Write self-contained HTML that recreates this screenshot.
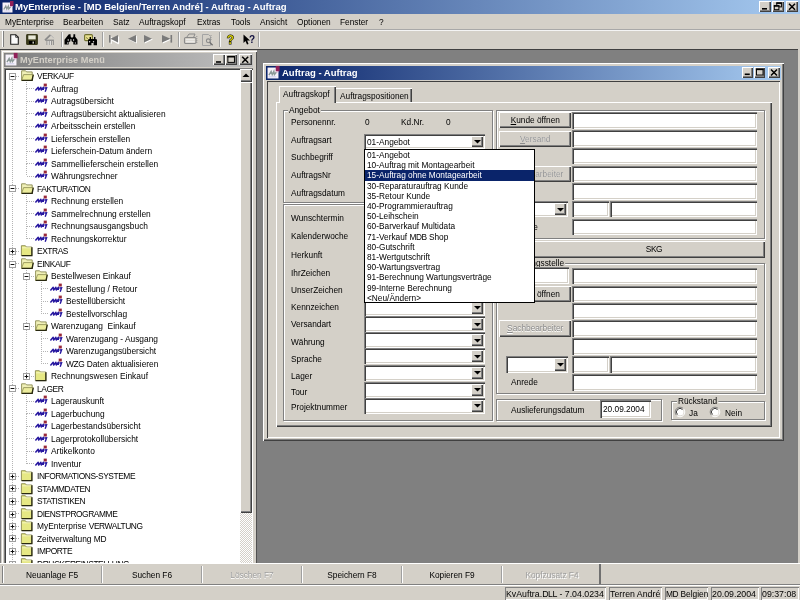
<!DOCTYPE html><html><head><meta charset="utf-8"><style>
*{margin:0;padding:0}
html,body{width:800px;height:600px;overflow:hidden;background:#d4d0c8;position:relative}
#root{position:absolute;left:0;top:0;width:800px;height:600px;will-change:transform}
div,svg{position:absolute}
.t{transform:scaleX(0.94);transform-origin:0 0;font-family:"Liberation Sans",sans-serif;font-size:8.83px;line-height:10px;white-space:nowrap;color:#000}
.b{will-change:transform;font-family:"Liberation Sans",sans-serif;font-size:9.5px;font-weight:bold;line-height:12px;white-space:nowrap;color:#fff}
</style></head><body><div id="root">

<div style="left:0px;top:0px;width:800px;height:14px;background:linear-gradient(to right,#0a246a,#a6caf0)"></div>
<svg style="position:absolute;left:2px;top:1.5px;overflow:visible" width="11" height="11" viewBox="0 0 11 11"><rect x="0.5" y="0.5" width="10" height="10" fill="#f6f2fa"/><rect x="8" y="-1" width="3.5" height="5" fill="#902058"/><rect x="8" y="4" width="2.5" height="1" fill="#e0b0d0"/><path d="M1.8,7.5 L3.8,4 L4.8,7 L6.3,4 L6.8,7 L8.5,4.8" fill="none" stroke="#8c9a98" stroke-width="1.3"/><rect x="1.5" y="8.6" width="7" height="0.8" fill="#c8c8e8"/></svg>
<div class="b" style="left:15px;top:1px;">MyEnterprise - [MD Belgien/Terren André] - Auftrag - Auftrag</div>
<div style="left:759px;top:1px;width:12px;height:11px;background:#d4d0c8;box-shadow:inset 1px 1px 0 #ffffff,inset -1px -1px 0 #404040,inset -2px -2px 0 #808080"></div>
<svg style="position:absolute;left:759px;top:1px;overflow:visible" width="12" height="11" viewBox="0 0 12 11"><rect x="3.0" y="7" width="5" height="1.6" fill="#000"/></svg>
<div style="left:772px;top:1px;width:12px;height:11px;background:#d4d0c8;box-shadow:inset 1px 1px 0 #ffffff,inset -1px -1px 0 #404040,inset -2px -2px 0 #808080"></div>
<svg style="position:absolute;left:772px;top:1px;overflow:visible" width="12" height="11" viewBox="0 0 12 11"><rect x="4.8" y="1.9" width="4.6" height="4" fill="none" stroke="#000" stroke-width="1"/><rect x="4.3" y="1.4000000000000004" width="5.6" height="1.5" fill="#000"/><rect x="2.3" y="4.7" width="4.6" height="4" fill="#d4d0c8" stroke="#000" stroke-width="1"/><rect x="1.7999999999999998" y="4.2" width="5.6" height="1.5" fill="#000"/></svg>
<div style="left:786px;top:1px;width:12px;height:11px;background:#d4d0c8;box-shadow:inset 1px 1px 0 #ffffff,inset -1px -1px 0 #404040,inset -2px -2px 0 #808080"></div>
<svg style="position:absolute;left:786px;top:1px;overflow:visible" width="12" height="11" viewBox="0 0 12 11"><path d="M3.0,2.7L9.0,8.7M9.0,2.7L3.0,8.7" stroke="#000" stroke-width="1.5"/></svg>
<div class="t" style="left:4.5px;top:17px;">MyEnterprise</div>
<div class="t" style="left:62.5px;top:17px;">Bearbeiten</div>
<div class="t" style="left:113px;top:17px;">Satz</div>
<div class="t" style="left:138.7px;top:17px;">Auftragskopf</div>
<div class="t" style="left:197px;top:17px;">Extras</div>
<div class="t" style="left:231.2px;top:17px;">Tools</div>
<div class="t" style="left:260px;top:17px;">Ansicht</div>
<div class="t" style="left:296.7px;top:17px;">Optionen</div>
<div class="t" style="left:340px;top:17px;">Fenster</div>
<div class="t" style="left:378.7px;top:17px;">?</div>
<div style="left:0px;top:29px;width:800px;height:1px;background:#a8a8a8"></div>
<div style="left:0px;top:30px;width:800px;height:1px;background:#f4f4f4"></div>
<div style="left:2px;top:31px;width:1px;height:16px;background:#fff"></div>
<div style="left:3px;top:31px;width:1px;height:16px;background:#808080"></div>
<svg style="position:absolute;left:10px;top:34px;overflow:visible" width="9" height="11" viewBox="0 0 9 11"><path d="M0.7,0.7h5l2.6,2.6v7h-7.6z" fill="#fafafa" stroke="#202020" stroke-width="1.1"/><path d="M5.7,0.7v2.6h2.6" fill="none" stroke="#202020" stroke-width="0.8"/></svg>
<svg style="position:absolute;left:26px;top:33.6px;overflow:visible" width="12" height="11" viewBox="0 0 12 11"><rect x="0.7" y="0.7" width="10.6" height="9.8" rx="0.8" fill="#3a3a1c" stroke="#3a3a1c" stroke-width="1.2"/><rect x="2.3" y="1.4" width="7.4" height="4" fill="#e8e8d8"/><rect x="3" y="7" width="6" height="3" fill="#000"/><rect x="6.5" y="7.6" width="1.5" height="2" fill="#c8c8b8"/></svg>
<svg style="position:absolute;left:43.5px;top:33.5px;overflow:visible" width="11" height="11" viewBox="0 0 11 11"><path d="M1,6.2 L6.5,0.8" stroke="#8a8a8a" stroke-width="1.7"/><path d="M6.8,1 L9.8,4.2" stroke="#b4b4b4" stroke-width="1"/><rect x="1.5" y="5.6" width="8.5" height="1.3" fill="#8c8c8c"/><path d="M3,7 v4 M5.2,7 v4 M7.4,7 v4 M9.4,7 v4" stroke="#8c8c8c" stroke-width="1"/><path d="M4.1,7 v4 M6.3,7 v4" stroke="#e8e8e8" stroke-width="0.8"/></svg>
<div style="left:61px;top:32px;width:1px;height:15px;background:#a0a0a0"></div>
<div style="left:62px;top:32px;width:1px;height:15px;background:#f8f8f8"></div>
<svg style="position:absolute;left:66px;top:34.2px;overflow:visible" width="12" height="11" viewBox="0 0 12 11"><path d="M2.8,0.3h1.8v2.2l1.4,1.6l1.4,-1.6v-2.2h1.8v2.5l2.3,3v4.8h-4.2v-2.8h-1.5v-1h-1.6v1h-1.5v2.8h-4.2v-4.8l2.3,-3z" fill="#000"/><ellipse cx="2.2" cy="6" rx="0.6" ry="0.9" fill="#d0d0d0"/><ellipse cx="4.9" cy="6" rx="0.6" ry="0.9" fill="#d0d0d0"/><ellipse cx="7.6" cy="6" rx="0.6" ry="0.9" fill="#c0c0c0"/><ellipse cx="1.6" cy="9" rx="0.6" ry="0.8" fill="#d0d0d0"/><ellipse cx="9.4" cy="9" rx="0.6" ry="0.8" fill="#c0c0c0"/></svg>
<svg style="position:absolute;left:84px;top:33.5px;overflow:visible" width="9" height="7" viewBox="0 0 9 7"><rect x="0.6" y="0.6" width="7.8" height="6" rx="1" fill="#e8e090" stroke="#707030" stroke-width="1.1"/><path d="M2,3.5 l2,1.2" stroke="#707030" stroke-width="0.8"/></svg>
<svg style="position:absolute;left:88px;top:36.7px;overflow:visible" width="9" height="8.5" viewBox="0 0 9 8.5"><path d="M1.6,0h1.4v2h3v-2h1.4v2l1.6,0.5v5.8h-3.4v-2.3h-2.2v2.3h-3.4v-5.8l1.6,-0.5z" fill="#000"/><circle cx="1.6" cy="4.8" r="0.7" fill="#e0e0e0"/><circle cx="5.5" cy="4.8" r="0.7" fill="#e0e0e0"/></svg>
<div style="left:102px;top:32px;width:1px;height:15px;background:#a0a0a0"></div>
<div style="left:103px;top:32px;width:1px;height:15px;background:#f8f8f8"></div>
<svg style="position:absolute;left:109px;top:35px;overflow:visible" width="10" height="8" viewBox="0 0 10 8"><path d="M1.5,1 v7 M2,4.5 L8.8,1 V8z" fill="#ffffff" stroke="#ffffff" stroke-width="1" transform="translate(0.8,0.8)"/><rect x="0" y="0" width="1.5" height="7.6" fill="#7a7a7a"/><path d="M1.5,3.8 L9,0 V7.6z" fill="#7a7a7a"/></svg>
<svg style="position:absolute;left:128px;top:35px;overflow:visible" width="9" height="8" viewBox="0 0 9 8"><path d="M0,3.8 L8,0 V7.6z" fill="#ffffff" transform="translate(0.8,0.8)"/><path d="M0,3.8 L8,0 V7.6z" fill="#7a7a7a"/></svg>
<svg style="position:absolute;left:144px;top:35px;overflow:visible" width="9" height="8" viewBox="0 0 9 8"><path d="M8,3.8 L0,0 V7.6z" fill="#ffffff" transform="translate(0.8,0.8)"/><path d="M8,3.8 L0,0 V7.6z" fill="#7a7a7a"/></svg>
<svg style="position:absolute;left:162px;top:35px;overflow:visible" width="11" height="8" viewBox="0 0 11 8"><path d="M8.5,3.8 L0,0 V7.6z" fill="#ffffff" transform="translate(0.8,0.8)"/><path d="M8.5,3.8 L0,0 V7.6z" fill="#7a7a7a"/><rect x="8.5" y="0" width="1.6" height="7.6" fill="#7a7a7a"/></svg>
<div style="left:178px;top:32px;width:1px;height:15px;background:#a0a0a0"></div>
<div style="left:179px;top:32px;width:1px;height:15px;background:#f8f8f8"></div>
<svg style="position:absolute;left:183.5px;top:33px;overflow:visible" width="13" height="11" viewBox="0 0 13 11"><path d="M2.5,4.5 L5,1 H11 L9.5,4.5" fill="none" stroke="#8a8a8a" stroke-width="1"/><rect x="0.5" y="4.5" width="11.5" height="6" rx="1.2" fill="none" stroke="#8a8a8a" stroke-width="1.1"/><path d="M1.8,6.8 h9 M1.8,8.8 h9" stroke="#f4f4f4" stroke-width="1"/><path d="M12.8,3 v8" stroke="#909090" stroke-width="0.9" stroke-dasharray="1 1"/></svg>
<svg style="position:absolute;left:201.5px;top:33.5px;overflow:visible" width="12" height="12" viewBox="0 0 12 12"><path d="M0.5,0.5 h6 l2,2 v9 h-8z" fill="none" stroke="#a4a4a4" stroke-width="1"/><circle cx="6.3" cy="6.8" r="1.9" fill="none" stroke="#8a8a8a" stroke-width="1.1"/><path d="M7.6,8.2 l3,3" stroke="#707070" stroke-width="1.4"/><path d="M9,1 v5" stroke="#909090" stroke-width="0.9" stroke-dasharray="1 1"/></svg>
<div style="left:219px;top:32px;width:1px;height:15px;background:#a0a0a0"></div>
<div style="left:220px;top:32px;width:1px;height:15px;background:#f8f8f8"></div>
<svg style="position:absolute;left:225.5px;top:33.5px;overflow:visible" width="9" height="12" viewBox="0 0 9 12"><text x="4.5" y="10" text-anchor="middle" font-family="Liberation Sans" font-weight="bold" font-size="12" fill="#c8c000" stroke="#000" stroke-width="0.9" paint-order="stroke">?</text></svg>
<svg style="position:absolute;left:242.5px;top:33.5px;overflow:visible" width="12" height="11" viewBox="0 0 12 11"><path d="M0.5,0.5 L0.5,9 L2.5,7 L4,10.5 L5.5,10 L4.2,6.5 L7,6.5z" fill="#000"/><text x="9" y="8.5" text-anchor="middle" font-family="Liberation Sans" font-weight="bold" font-size="10" fill="#101040">?</text></svg>
<div style="left:258px;top:32px;width:1px;height:15px;background:#a0a0a0"></div>
<div style="left:259px;top:32px;width:1px;height:15px;background:#f8f8f8"></div>
<div style="left:0px;top:49px;width:800px;height:514px;background:#808080"></div>
<div style="left:0px;top:49px;width:800px;height:1px;background:#404040"></div>
<div style="left:798px;top:49px;width:2px;height:514px;background:#d4d0c8"></div>
<div style="left:1px;top:50px;width:256px;height:520px;background:#d4d0c8;box-shadow:inset 1px 1px 0 #d4d0c8,inset 2px 2px 0 #ffffff,inset -1px 0 0 #505050"></div>
<div style="left:4px;top:53px;width:248.5px;height:14px;background:linear-gradient(to right,#808080,#c0c0c0)"></div>
<svg style="position:absolute;left:5px;top:54px;overflow:visible" width="12" height="12" viewBox="0 0 11 11"><rect x="0.5" y="0.5" width="10" height="10" fill="#f6f2fa"/><rect x="8" y="-1" width="3.5" height="5" fill="#902058"/><rect x="8" y="4" width="2.5" height="1" fill="#e0b0d0"/><path d="M1.8,7.5 L3.8,4 L4.8,7 L6.3,4 L6.8,7 L8.5,4.8" fill="none" stroke="#8c9a98" stroke-width="1.3"/><rect x="1.5" y="8.6" width="7" height="0.8" fill="#c8c8e8"/></svg>
<div class="b" style="left:20px;top:54px;color:#d4d0c8;font-size:9.2px">MyEnterprise Menü</div>
<div style="left:213.2px;top:54.3px;width:12px;height:11.2px;background:#d4d0c8;box-shadow:inset 1px 1px 0 #ffffff,inset -1px -1px 0 #404040,inset -2px -2px 0 #808080"></div>
<svg style="position:absolute;left:213.2px;top:54.3px;overflow:visible" width="12" height="11.2" viewBox="0 0 12 11.2"><rect x="3.0" y="7.199999999999999" width="5" height="1.6" fill="#000"/></svg>
<div style="left:225.2px;top:54.3px;width:12.3px;height:11.2px;background:#d4d0c8;box-shadow:inset 1px 1px 0 #ffffff,inset -1px -1px 0 #404040,inset -2px -2px 0 #808080"></div>
<svg style="position:absolute;left:225.2px;top:54.3px;overflow:visible" width="12.3" height="11.2" viewBox="0 0 12.3 11.2"><rect x="2.8500000000000005" y="2.3999999999999995" width="6.6" height="6" fill="none" stroke="#000" stroke-width="1"/><rect x="2.3500000000000005" y="1.8999999999999995" width="7.6" height="1.6" fill="#000"/></svg>
<div style="left:239.3px;top:54.3px;width:12.4px;height:11.2px;background:#d4d0c8;box-shadow:inset 1px 1px 0 #ffffff,inset -1px -1px 0 #404040,inset -2px -2px 0 #808080"></div>
<svg style="position:absolute;left:239.3px;top:54.3px;overflow:visible" width="12.4" height="11.2" viewBox="0 0 12.4 11.2"><path d="M3.2,2.8L9.2,8.8M9.2,2.8L3.2,8.8" stroke="#000" stroke-width="1.5"/></svg>
<div style="left:4px;top:68px;width:248.5px;height:500px;background:#fff;box-shadow:inset 1px 1px 0 #808080,inset 2px 2px 0 #404040"></div>
<div style="left:240px;top:69px;width:12px;height:494px;background:repeating-conic-gradient(#fff 0 25%,#d4d0c8 0 50%) 0 0/2px 2px"></div>
<div style="left:240px;top:69px;width:12px;height:12.5px;background:#d4d0c8;box-shadow:inset 1px 1px 0 #ffffff,inset -1px -1px 0 #404040,inset -2px -2px 0 #808080"></div>
<svg style="position:absolute;left:242px;top:73px;overflow:visible" width="8" height="5" viewBox="0 0 8 5"><path d="M4,0.5 L7.5,4 H0.5z" fill="#000"/></svg>
<div style="left:240px;top:81.5px;width:12px;height:431.5px;background:#d4d0c8;box-shadow:inset 1px 1px 0 #ffffff,inset -1px -1px 0 #404040,inset -2px -2px 0 #808080"></div>
<div style="left:11.5px;top:76.0px;width:1px;height:112.5px;background:repeating-linear-gradient(to bottom,#b4b4b4 0 1px,transparent 1px 2px)"></div>
<div style="left:26.2px;top:88.5px;width:1px;height:12.5px;background:repeating-linear-gradient(to bottom,#b4b4b4 0 1px,transparent 1px 2px)"></div>
<div style="left:26.2px;top:80.0px;width:1px;height:8.5px;background:repeating-linear-gradient(to bottom,#b4b4b4 0 1px,transparent 1px 2px)"></div>
<div style="left:26.2px;top:101.0px;width:1px;height:12.5px;background:repeating-linear-gradient(to bottom,#b4b4b4 0 1px,transparent 1px 2px)"></div>
<div style="left:26.2px;top:113.5px;width:1px;height:12.5px;background:repeating-linear-gradient(to bottom,#b4b4b4 0 1px,transparent 1px 2px)"></div>
<div style="left:26.2px;top:126.0px;width:1px;height:12.5px;background:repeating-linear-gradient(to bottom,#b4b4b4 0 1px,transparent 1px 2px)"></div>
<div style="left:26.2px;top:138.5px;width:1px;height:12.5px;background:repeating-linear-gradient(to bottom,#b4b4b4 0 1px,transparent 1px 2px)"></div>
<div style="left:26.2px;top:151.0px;width:1px;height:12.5px;background:repeating-linear-gradient(to bottom,#b4b4b4 0 1px,transparent 1px 2px)"></div>
<div style="left:26.2px;top:163.5px;width:1px;height:12.5px;background:repeating-linear-gradient(to bottom,#b4b4b4 0 1px,transparent 1px 2px)"></div>
<div style="left:11.5px;top:188.5px;width:1px;height:62.5px;background:repeating-linear-gradient(to bottom,#b4b4b4 0 1px,transparent 1px 2px)"></div>
<div style="left:26.2px;top:201.0px;width:1px;height:12.5px;background:repeating-linear-gradient(to bottom,#b4b4b4 0 1px,transparent 1px 2px)"></div>
<div style="left:26.2px;top:192.5px;width:1px;height:8.5px;background:repeating-linear-gradient(to bottom,#b4b4b4 0 1px,transparent 1px 2px)"></div>
<div style="left:26.2px;top:213.5px;width:1px;height:12.5px;background:repeating-linear-gradient(to bottom,#b4b4b4 0 1px,transparent 1px 2px)"></div>
<div style="left:26.2px;top:226.0px;width:1px;height:12.5px;background:repeating-linear-gradient(to bottom,#b4b4b4 0 1px,transparent 1px 2px)"></div>
<div style="left:11.5px;top:251.0px;width:1px;height:12.5px;background:repeating-linear-gradient(to bottom,#b4b4b4 0 1px,transparent 1px 2px)"></div>
<div style="left:11.5px;top:263.5px;width:1px;height:125.0px;background:repeating-linear-gradient(to bottom,#b4b4b4 0 1px,transparent 1px 2px)"></div>
<div style="left:26.2px;top:276.0px;width:1px;height:50.0px;background:repeating-linear-gradient(to bottom,#b4b4b4 0 1px,transparent 1px 2px)"></div>
<div style="left:26.2px;top:267.5px;width:1px;height:8.5px;background:repeating-linear-gradient(to bottom,#b4b4b4 0 1px,transparent 1px 2px)"></div>
<div style="left:40.9px;top:288.5px;width:1px;height:12.5px;background:repeating-linear-gradient(to bottom,#b4b4b4 0 1px,transparent 1px 2px)"></div>
<div style="left:40.9px;top:280.0px;width:1px;height:8.5px;background:repeating-linear-gradient(to bottom,#b4b4b4 0 1px,transparent 1px 2px)"></div>
<div style="left:40.9px;top:301.0px;width:1px;height:12.5px;background:repeating-linear-gradient(to bottom,#b4b4b4 0 1px,transparent 1px 2px)"></div>
<div style="left:26.2px;top:326.0px;width:1px;height:50.0px;background:repeating-linear-gradient(to bottom,#b4b4b4 0 1px,transparent 1px 2px)"></div>
<div style="left:40.9px;top:338.5px;width:1px;height:12.5px;background:repeating-linear-gradient(to bottom,#b4b4b4 0 1px,transparent 1px 2px)"></div>
<div style="left:40.9px;top:330.0px;width:1px;height:8.5px;background:repeating-linear-gradient(to bottom,#b4b4b4 0 1px,transparent 1px 2px)"></div>
<div style="left:40.9px;top:351.0px;width:1px;height:12.5px;background:repeating-linear-gradient(to bottom,#b4b4b4 0 1px,transparent 1px 2px)"></div>
<div style="left:11.5px;top:388.5px;width:1px;height:87.5px;background:repeating-linear-gradient(to bottom,#b4b4b4 0 1px,transparent 1px 2px)"></div>
<div style="left:26.2px;top:401.0px;width:1px;height:12.5px;background:repeating-linear-gradient(to bottom,#b4b4b4 0 1px,transparent 1px 2px)"></div>
<div style="left:26.2px;top:392.5px;width:1px;height:8.5px;background:repeating-linear-gradient(to bottom,#b4b4b4 0 1px,transparent 1px 2px)"></div>
<div style="left:26.2px;top:413.5px;width:1px;height:12.5px;background:repeating-linear-gradient(to bottom,#b4b4b4 0 1px,transparent 1px 2px)"></div>
<div style="left:26.2px;top:426.0px;width:1px;height:12.5px;background:repeating-linear-gradient(to bottom,#b4b4b4 0 1px,transparent 1px 2px)"></div>
<div style="left:26.2px;top:438.5px;width:1px;height:12.5px;background:repeating-linear-gradient(to bottom,#b4b4b4 0 1px,transparent 1px 2px)"></div>
<div style="left:26.2px;top:451.0px;width:1px;height:12.5px;background:repeating-linear-gradient(to bottom,#b4b4b4 0 1px,transparent 1px 2px)"></div>
<div style="left:11.5px;top:476.0px;width:1px;height:12.5px;background:repeating-linear-gradient(to bottom,#b4b4b4 0 1px,transparent 1px 2px)"></div>
<div style="left:11.5px;top:488.5px;width:1px;height:12.5px;background:repeating-linear-gradient(to bottom,#b4b4b4 0 1px,transparent 1px 2px)"></div>
<div style="left:11.5px;top:501.0px;width:1px;height:12.5px;background:repeating-linear-gradient(to bottom,#b4b4b4 0 1px,transparent 1px 2px)"></div>
<div style="left:11.5px;top:513.5px;width:1px;height:12.5px;background:repeating-linear-gradient(to bottom,#b4b4b4 0 1px,transparent 1px 2px)"></div>
<div style="left:11.5px;top:526.0px;width:1px;height:12.5px;background:repeating-linear-gradient(to bottom,#b4b4b4 0 1px,transparent 1px 2px)"></div>
<div style="left:11.5px;top:538.5px;width:1px;height:12.5px;background:repeating-linear-gradient(to bottom,#b4b4b4 0 1px,transparent 1px 2px)"></div>
<div style="left:11.5px;top:551.0px;width:1px;height:12.5px;background:repeating-linear-gradient(to bottom,#b4b4b4 0 1px,transparent 1px 2px)"></div>
<div style="left:12.0px;top:75.5px;width:8.0px;height:1px;background:repeating-linear-gradient(to right,#b4b4b4 0 1px,transparent 1px 2px)"></div>
<svg style="position:absolute;left:9px;top:73px;overflow:visible" width="7" height="7" viewBox="0 0 7 7"><rect x="0.5" y="0.5" width="6" height="6" fill="#fff" stroke="#a0a0a0" stroke-width="1"/><path d="M1.6,3.5h3.8" stroke="#101010" stroke-width="1"/></svg>
<svg style="position:absolute;left:20.5px;top:71.0px;overflow:visible" width="13" height="10" viewBox="0 0 13 10"><path d="M0.6,-0.2h4l1,1.1h5.6v8.6h-10.6z" fill="#f0f0b8" stroke="#8a8a50" stroke-width="0.9"/><path d="M0.6,9.4 L2.6,3.6 H12.4 L10.6,9.4z" fill="#ecec9c" stroke="#8a8a50" stroke-width="0.8"/><path d="M12.2,3.8 L11.2,9.3 H0.8" fill="none" stroke="#282810" stroke-width="1.3"/></svg>
<div class="t" style="left:36.5px;top:71.0px;font-size:8.94px"><span style="letter-spacing:-0.45px">VERKAUF</span></div>
<div style="left:26.7px;top:88.0px;width:8.000000000000004px;height:1px;background:repeating-linear-gradient(to right,#b4b4b4 0 1px,transparent 1px 2px)"></div>
<svg style="position:absolute;left:35.2px;top:83.5px;overflow:visible" width="13" height="9" viewBox="0 0 13 9"><rect x="8.7" y="-0.4" width="3.1" height="2.9" fill="#982838"/><path d="M0.4,6.5 L3.2,3.3 L3.7,6 L5.9,3.3 L6.3,6 L8.5,3.3 L8.2,6" stroke="#2818a0" stroke-width="1.5" fill="none" stroke-linejoin="round"/><path d="M9.4,4 L11.6,3.8 L10.2,7.8" stroke="#2818a0" stroke-width="1.4" fill="none"/></svg>
<div class="t" style="left:51.2px;top:83.5px;font-size:8.94px">Auftrag</div>
<div style="left:26.7px;top:100.5px;width:8.000000000000004px;height:1px;background:repeating-linear-gradient(to right,#b4b4b4 0 1px,transparent 1px 2px)"></div>
<svg style="position:absolute;left:35.2px;top:96.0px;overflow:visible" width="13" height="9" viewBox="0 0 13 9"><rect x="8.7" y="-0.4" width="3.1" height="2.9" fill="#982838"/><path d="M0.4,6.5 L3.2,3.3 L3.7,6 L5.9,3.3 L6.3,6 L8.5,3.3 L8.2,6" stroke="#2818a0" stroke-width="1.5" fill="none" stroke-linejoin="round"/><path d="M9.4,4 L11.6,3.8 L10.2,7.8" stroke="#2818a0" stroke-width="1.4" fill="none"/></svg>
<div class="t" style="left:51.2px;top:96.0px;font-size:8.94px">Autragsübersicht</div>
<div style="left:26.7px;top:113.0px;width:8.000000000000004px;height:1px;background:repeating-linear-gradient(to right,#b4b4b4 0 1px,transparent 1px 2px)"></div>
<svg style="position:absolute;left:35.2px;top:108.5px;overflow:visible" width="13" height="9" viewBox="0 0 13 9"><rect x="8.7" y="-0.4" width="3.1" height="2.9" fill="#982838"/><path d="M0.4,6.5 L3.2,3.3 L3.7,6 L5.9,3.3 L6.3,6 L8.5,3.3 L8.2,6" stroke="#2818a0" stroke-width="1.5" fill="none" stroke-linejoin="round"/><path d="M9.4,4 L11.6,3.8 L10.2,7.8" stroke="#2818a0" stroke-width="1.4" fill="none"/></svg>
<div class="t" style="left:51.2px;top:108.5px;font-size:8.94px">Auftragsübersicht aktualisieren</div>
<div style="left:26.7px;top:125.5px;width:8.000000000000004px;height:1px;background:repeating-linear-gradient(to right,#b4b4b4 0 1px,transparent 1px 2px)"></div>
<svg style="position:absolute;left:35.2px;top:121.0px;overflow:visible" width="13" height="9" viewBox="0 0 13 9"><rect x="8.7" y="-0.4" width="3.1" height="2.9" fill="#982838"/><path d="M0.4,6.5 L3.2,3.3 L3.7,6 L5.9,3.3 L6.3,6 L8.5,3.3 L8.2,6" stroke="#2818a0" stroke-width="1.5" fill="none" stroke-linejoin="round"/><path d="M9.4,4 L11.6,3.8 L10.2,7.8" stroke="#2818a0" stroke-width="1.4" fill="none"/></svg>
<div class="t" style="left:51.2px;top:121.0px;font-size:8.94px">Arbeitsschein erstellen</div>
<div style="left:26.7px;top:138.0px;width:8.000000000000004px;height:1px;background:repeating-linear-gradient(to right,#b4b4b4 0 1px,transparent 1px 2px)"></div>
<svg style="position:absolute;left:35.2px;top:133.5px;overflow:visible" width="13" height="9" viewBox="0 0 13 9"><rect x="8.7" y="-0.4" width="3.1" height="2.9" fill="#982838"/><path d="M0.4,6.5 L3.2,3.3 L3.7,6 L5.9,3.3 L6.3,6 L8.5,3.3 L8.2,6" stroke="#2818a0" stroke-width="1.5" fill="none" stroke-linejoin="round"/><path d="M9.4,4 L11.6,3.8 L10.2,7.8" stroke="#2818a0" stroke-width="1.4" fill="none"/></svg>
<div class="t" style="left:51.2px;top:133.5px;font-size:8.94px">Lieferschein erstellen</div>
<div style="left:26.7px;top:150.5px;width:8.000000000000004px;height:1px;background:repeating-linear-gradient(to right,#b4b4b4 0 1px,transparent 1px 2px)"></div>
<svg style="position:absolute;left:35.2px;top:146.0px;overflow:visible" width="13" height="9" viewBox="0 0 13 9"><rect x="8.7" y="-0.4" width="3.1" height="2.9" fill="#982838"/><path d="M0.4,6.5 L3.2,3.3 L3.7,6 L5.9,3.3 L6.3,6 L8.5,3.3 L8.2,6" stroke="#2818a0" stroke-width="1.5" fill="none" stroke-linejoin="round"/><path d="M9.4,4 L11.6,3.8 L10.2,7.8" stroke="#2818a0" stroke-width="1.4" fill="none"/></svg>
<div class="t" style="left:51.2px;top:146.0px;font-size:8.94px">Lieferschein-Datum ändern</div>
<div style="left:26.7px;top:163.0px;width:8.000000000000004px;height:1px;background:repeating-linear-gradient(to right,#b4b4b4 0 1px,transparent 1px 2px)"></div>
<svg style="position:absolute;left:35.2px;top:158.5px;overflow:visible" width="13" height="9" viewBox="0 0 13 9"><rect x="8.7" y="-0.4" width="3.1" height="2.9" fill="#982838"/><path d="M0.4,6.5 L3.2,3.3 L3.7,6 L5.9,3.3 L6.3,6 L8.5,3.3 L8.2,6" stroke="#2818a0" stroke-width="1.5" fill="none" stroke-linejoin="round"/><path d="M9.4,4 L11.6,3.8 L10.2,7.8" stroke="#2818a0" stroke-width="1.4" fill="none"/></svg>
<div class="t" style="left:51.2px;top:158.5px;font-size:8.94px">Sammellieferschein erstellen</div>
<div style="left:26.7px;top:175.5px;width:8.000000000000004px;height:1px;background:repeating-linear-gradient(to right,#b4b4b4 0 1px,transparent 1px 2px)"></div>
<svg style="position:absolute;left:35.2px;top:171.0px;overflow:visible" width="13" height="9" viewBox="0 0 13 9"><rect x="8.7" y="-0.4" width="3.1" height="2.9" fill="#982838"/><path d="M0.4,6.5 L3.2,3.3 L3.7,6 L5.9,3.3 L6.3,6 L8.5,3.3 L8.2,6" stroke="#2818a0" stroke-width="1.5" fill="none" stroke-linejoin="round"/><path d="M9.4,4 L11.6,3.8 L10.2,7.8" stroke="#2818a0" stroke-width="1.4" fill="none"/></svg>
<div class="t" style="left:51.2px;top:171.0px;font-size:8.94px">Währungsrechner</div>
<div style="left:12.0px;top:188.0px;width:8.0px;height:1px;background:repeating-linear-gradient(to right,#b4b4b4 0 1px,transparent 1px 2px)"></div>
<svg style="position:absolute;left:9px;top:185px;overflow:visible" width="7" height="7" viewBox="0 0 7 7"><rect x="0.5" y="0.5" width="6" height="6" fill="#fff" stroke="#a0a0a0" stroke-width="1"/><path d="M1.6,3.5h3.8" stroke="#101010" stroke-width="1"/></svg>
<svg style="position:absolute;left:20.5px;top:183.5px;overflow:visible" width="13" height="10" viewBox="0 0 13 10"><path d="M0.6,-0.2h4l1,1.1h5.6v8.6h-10.6z" fill="#f0f0b8" stroke="#8a8a50" stroke-width="0.9"/><path d="M0.6,9.4 L2.6,3.6 H12.4 L10.6,9.4z" fill="#ecec9c" stroke="#8a8a50" stroke-width="0.8"/><path d="M12.2,3.8 L11.2,9.3 H0.8" fill="none" stroke="#282810" stroke-width="1.3"/></svg>
<div class="t" style="left:36.5px;top:183.5px;font-size:8.94px"><span style="letter-spacing:-0.45px">FAKTURATION</span></div>
<div style="left:26.7px;top:200.5px;width:8.000000000000004px;height:1px;background:repeating-linear-gradient(to right,#b4b4b4 0 1px,transparent 1px 2px)"></div>
<svg style="position:absolute;left:35.2px;top:196.0px;overflow:visible" width="13" height="9" viewBox="0 0 13 9"><rect x="8.7" y="-0.4" width="3.1" height="2.9" fill="#982838"/><path d="M0.4,6.5 L3.2,3.3 L3.7,6 L5.9,3.3 L6.3,6 L8.5,3.3 L8.2,6" stroke="#2818a0" stroke-width="1.5" fill="none" stroke-linejoin="round"/><path d="M9.4,4 L11.6,3.8 L10.2,7.8" stroke="#2818a0" stroke-width="1.4" fill="none"/></svg>
<div class="t" style="left:51.2px;top:196.0px;font-size:8.94px">Rechnung erstellen</div>
<div style="left:26.7px;top:213.0px;width:8.000000000000004px;height:1px;background:repeating-linear-gradient(to right,#b4b4b4 0 1px,transparent 1px 2px)"></div>
<svg style="position:absolute;left:35.2px;top:208.5px;overflow:visible" width="13" height="9" viewBox="0 0 13 9"><rect x="8.7" y="-0.4" width="3.1" height="2.9" fill="#982838"/><path d="M0.4,6.5 L3.2,3.3 L3.7,6 L5.9,3.3 L6.3,6 L8.5,3.3 L8.2,6" stroke="#2818a0" stroke-width="1.5" fill="none" stroke-linejoin="round"/><path d="M9.4,4 L11.6,3.8 L10.2,7.8" stroke="#2818a0" stroke-width="1.4" fill="none"/></svg>
<div class="t" style="left:51.2px;top:208.5px;font-size:8.94px">Sammelrechnung erstellen</div>
<div style="left:26.7px;top:225.5px;width:8.000000000000004px;height:1px;background:repeating-linear-gradient(to right,#b4b4b4 0 1px,transparent 1px 2px)"></div>
<svg style="position:absolute;left:35.2px;top:221.0px;overflow:visible" width="13" height="9" viewBox="0 0 13 9"><rect x="8.7" y="-0.4" width="3.1" height="2.9" fill="#982838"/><path d="M0.4,6.5 L3.2,3.3 L3.7,6 L5.9,3.3 L6.3,6 L8.5,3.3 L8.2,6" stroke="#2818a0" stroke-width="1.5" fill="none" stroke-linejoin="round"/><path d="M9.4,4 L11.6,3.8 L10.2,7.8" stroke="#2818a0" stroke-width="1.4" fill="none"/></svg>
<div class="t" style="left:51.2px;top:221.0px;font-size:8.94px">Rechnungsausgangsbuch</div>
<div style="left:26.7px;top:238.0px;width:8.000000000000004px;height:1px;background:repeating-linear-gradient(to right,#b4b4b4 0 1px,transparent 1px 2px)"></div>
<svg style="position:absolute;left:35.2px;top:233.5px;overflow:visible" width="13" height="9" viewBox="0 0 13 9"><rect x="8.7" y="-0.4" width="3.1" height="2.9" fill="#982838"/><path d="M0.4,6.5 L3.2,3.3 L3.7,6 L5.9,3.3 L6.3,6 L8.5,3.3 L8.2,6" stroke="#2818a0" stroke-width="1.5" fill="none" stroke-linejoin="round"/><path d="M9.4,4 L11.6,3.8 L10.2,7.8" stroke="#2818a0" stroke-width="1.4" fill="none"/></svg>
<div class="t" style="left:51.2px;top:233.5px;font-size:8.94px">Rechnungskorrektur</div>
<div style="left:12.0px;top:250.5px;width:8.0px;height:1px;background:repeating-linear-gradient(to right,#b4b4b4 0 1px,transparent 1px 2px)"></div>
<svg style="position:absolute;left:9px;top:248px;overflow:visible" width="7" height="7" viewBox="0 0 7 7"><rect x="0.5" y="0.5" width="6" height="6" fill="#fff" stroke="#a0a0a0" stroke-width="1"/><path d="M1.6,3.5h3.8M3.5,1.6v3.8" stroke="#101010" stroke-width="1"/></svg>
<svg style="position:absolute;left:20.5px;top:246.0px;overflow:visible" width="13" height="10" viewBox="0 0 13 10"><path d="M0.4,-0.3h4l1,1.3h5.4v8.6h-10.4z" fill="#e6e884" stroke="#8a8a50" stroke-width="0.9"/><path d="M1.2,1.8h9.2" stroke="#fafad0" stroke-width="0.8"/><path d="M10.9,1.2 V9.7 H0.6" fill="none" stroke="#282810" stroke-width="1.3"/></svg>
<div class="t" style="left:36.5px;top:246.0px;font-size:8.94px"><span style="letter-spacing:-0.45px">EXTRAS</span></div>
<div style="left:12.0px;top:263.0px;width:8.0px;height:1px;background:repeating-linear-gradient(to right,#b4b4b4 0 1px,transparent 1px 2px)"></div>
<svg style="position:absolute;left:9px;top:261px;overflow:visible" width="7" height="7" viewBox="0 0 7 7"><rect x="0.5" y="0.5" width="6" height="6" fill="#fff" stroke="#a0a0a0" stroke-width="1"/><path d="M1.6,3.5h3.8" stroke="#101010" stroke-width="1"/></svg>
<svg style="position:absolute;left:20.5px;top:258.5px;overflow:visible" width="13" height="10" viewBox="0 0 13 10"><path d="M0.6,-0.2h4l1,1.1h5.6v8.6h-10.6z" fill="#f0f0b8" stroke="#8a8a50" stroke-width="0.9"/><path d="M0.6,9.4 L2.6,3.6 H12.4 L10.6,9.4z" fill="#ecec9c" stroke="#8a8a50" stroke-width="0.8"/><path d="M12.2,3.8 L11.2,9.3 H0.8" fill="none" stroke="#282810" stroke-width="1.3"/></svg>
<div class="t" style="left:36.5px;top:258.5px;font-size:8.94px"><span style="letter-spacing:-0.45px">EINKAUF</span></div>
<div style="left:26.7px;top:275.5px;width:8.000000000000004px;height:1px;background:repeating-linear-gradient(to right,#b4b4b4 0 1px,transparent 1px 2px)"></div>
<svg style="position:absolute;left:23px;top:273px;overflow:visible" width="7" height="7" viewBox="0 0 7 7"><rect x="0.5" y="0.5" width="6" height="6" fill="#fff" stroke="#a0a0a0" stroke-width="1"/><path d="M1.6,3.5h3.8" stroke="#101010" stroke-width="1"/></svg>
<svg style="position:absolute;left:35.2px;top:271.0px;overflow:visible" width="13" height="10" viewBox="0 0 13 10"><path d="M0.6,-0.2h4l1,1.1h5.6v8.6h-10.6z" fill="#f0f0b8" stroke="#8a8a50" stroke-width="0.9"/><path d="M0.6,9.4 L2.6,3.6 H12.4 L10.6,9.4z" fill="#ecec9c" stroke="#8a8a50" stroke-width="0.8"/><path d="M12.2,3.8 L11.2,9.3 H0.8" fill="none" stroke="#282810" stroke-width="1.3"/></svg>
<div class="t" style="left:51.2px;top:271.0px;font-size:8.94px">Bestellwesen Einkauf</div>
<div style="left:41.4px;top:288.0px;width:8.0px;height:1px;background:repeating-linear-gradient(to right,#b4b4b4 0 1px,transparent 1px 2px)"></div>
<svg style="position:absolute;left:49.9px;top:283.5px;overflow:visible" width="13" height="9" viewBox="0 0 13 9"><rect x="8.7" y="-0.4" width="3.1" height="2.9" fill="#982838"/><path d="M0.4,6.5 L3.2,3.3 L3.7,6 L5.9,3.3 L6.3,6 L8.5,3.3 L8.2,6" stroke="#2818a0" stroke-width="1.5" fill="none" stroke-linejoin="round"/><path d="M9.4,4 L11.6,3.8 L10.2,7.8" stroke="#2818a0" stroke-width="1.4" fill="none"/></svg>
<div class="t" style="left:65.9px;top:283.5px;font-size:8.94px">Bestellung / Retour</div>
<div style="left:41.4px;top:300.5px;width:8.0px;height:1px;background:repeating-linear-gradient(to right,#b4b4b4 0 1px,transparent 1px 2px)"></div>
<svg style="position:absolute;left:49.9px;top:296.0px;overflow:visible" width="13" height="9" viewBox="0 0 13 9"><rect x="8.7" y="-0.4" width="3.1" height="2.9" fill="#982838"/><path d="M0.4,6.5 L3.2,3.3 L3.7,6 L5.9,3.3 L6.3,6 L8.5,3.3 L8.2,6" stroke="#2818a0" stroke-width="1.5" fill="none" stroke-linejoin="round"/><path d="M9.4,4 L11.6,3.8 L10.2,7.8" stroke="#2818a0" stroke-width="1.4" fill="none"/></svg>
<div class="t" style="left:65.9px;top:296.0px;font-size:8.94px">Bestellübersicht</div>
<div style="left:41.4px;top:313.0px;width:8.0px;height:1px;background:repeating-linear-gradient(to right,#b4b4b4 0 1px,transparent 1px 2px)"></div>
<svg style="position:absolute;left:49.9px;top:308.5px;overflow:visible" width="13" height="9" viewBox="0 0 13 9"><rect x="8.7" y="-0.4" width="3.1" height="2.9" fill="#982838"/><path d="M0.4,6.5 L3.2,3.3 L3.7,6 L5.9,3.3 L6.3,6 L8.5,3.3 L8.2,6" stroke="#2818a0" stroke-width="1.5" fill="none" stroke-linejoin="round"/><path d="M9.4,4 L11.6,3.8 L10.2,7.8" stroke="#2818a0" stroke-width="1.4" fill="none"/></svg>
<div class="t" style="left:65.9px;top:308.5px;font-size:8.94px">Bestellvorschlag</div>
<div style="left:26.7px;top:325.5px;width:8.000000000000004px;height:1px;background:repeating-linear-gradient(to right,#b4b4b4 0 1px,transparent 1px 2px)"></div>
<svg style="position:absolute;left:23px;top:323px;overflow:visible" width="7" height="7" viewBox="0 0 7 7"><rect x="0.5" y="0.5" width="6" height="6" fill="#fff" stroke="#a0a0a0" stroke-width="1"/><path d="M1.6,3.5h3.8" stroke="#101010" stroke-width="1"/></svg>
<svg style="position:absolute;left:35.2px;top:321.0px;overflow:visible" width="13" height="10" viewBox="0 0 13 10"><path d="M0.6,-0.2h4l1,1.1h5.6v8.6h-10.6z" fill="#f0f0b8" stroke="#8a8a50" stroke-width="0.9"/><path d="M0.6,9.4 L2.6,3.6 H12.4 L10.6,9.4z" fill="#ecec9c" stroke="#8a8a50" stroke-width="0.8"/><path d="M12.2,3.8 L11.2,9.3 H0.8" fill="none" stroke="#282810" stroke-width="1.3"/></svg>
<div class="t" style="left:51.2px;top:321.0px;font-size:8.94px">Warenzugang&nbsp; Einkauf</div>
<div style="left:41.4px;top:338.0px;width:8.0px;height:1px;background:repeating-linear-gradient(to right,#b4b4b4 0 1px,transparent 1px 2px)"></div>
<svg style="position:absolute;left:49.9px;top:333.5px;overflow:visible" width="13" height="9" viewBox="0 0 13 9"><rect x="8.7" y="-0.4" width="3.1" height="2.9" fill="#982838"/><path d="M0.4,6.5 L3.2,3.3 L3.7,6 L5.9,3.3 L6.3,6 L8.5,3.3 L8.2,6" stroke="#2818a0" stroke-width="1.5" fill="none" stroke-linejoin="round"/><path d="M9.4,4 L11.6,3.8 L10.2,7.8" stroke="#2818a0" stroke-width="1.4" fill="none"/></svg>
<div class="t" style="left:65.9px;top:333.5px;font-size:8.94px">Warenzugang - Ausgang</div>
<div style="left:41.4px;top:350.5px;width:8.0px;height:1px;background:repeating-linear-gradient(to right,#b4b4b4 0 1px,transparent 1px 2px)"></div>
<svg style="position:absolute;left:49.9px;top:346.0px;overflow:visible" width="13" height="9" viewBox="0 0 13 9"><rect x="8.7" y="-0.4" width="3.1" height="2.9" fill="#982838"/><path d="M0.4,6.5 L3.2,3.3 L3.7,6 L5.9,3.3 L6.3,6 L8.5,3.3 L8.2,6" stroke="#2818a0" stroke-width="1.5" fill="none" stroke-linejoin="round"/><path d="M9.4,4 L11.6,3.8 L10.2,7.8" stroke="#2818a0" stroke-width="1.4" fill="none"/></svg>
<div class="t" style="left:65.9px;top:346.0px;font-size:8.94px">Warenzugangsübersicht</div>
<div style="left:41.4px;top:363.0px;width:8.0px;height:1px;background:repeating-linear-gradient(to right,#b4b4b4 0 1px,transparent 1px 2px)"></div>
<svg style="position:absolute;left:49.9px;top:358.5px;overflow:visible" width="13" height="9" viewBox="0 0 13 9"><rect x="8.7" y="-0.4" width="3.1" height="2.9" fill="#982838"/><path d="M0.4,6.5 L3.2,3.3 L3.7,6 L5.9,3.3 L6.3,6 L8.5,3.3 L8.2,6" stroke="#2818a0" stroke-width="1.5" fill="none" stroke-linejoin="round"/><path d="M9.4,4 L11.6,3.8 L10.2,7.8" stroke="#2818a0" stroke-width="1.4" fill="none"/></svg>
<div class="t" style="left:65.9px;top:358.5px;font-size:8.94px"><span style="letter-spacing:-0.45px">WZG</span> Daten aktualisieren</div>
<div style="left:26.7px;top:375.5px;width:8.000000000000004px;height:1px;background:repeating-linear-gradient(to right,#b4b4b4 0 1px,transparent 1px 2px)"></div>
<svg style="position:absolute;left:23px;top:373px;overflow:visible" width="7" height="7" viewBox="0 0 7 7"><rect x="0.5" y="0.5" width="6" height="6" fill="#fff" stroke="#a0a0a0" stroke-width="1"/><path d="M1.6,3.5h3.8M3.5,1.6v3.8" stroke="#101010" stroke-width="1"/></svg>
<svg style="position:absolute;left:35.2px;top:371.0px;overflow:visible" width="13" height="10" viewBox="0 0 13 10"><path d="M0.4,-0.3h4l1,1.3h5.4v8.6h-10.4z" fill="#e6e884" stroke="#8a8a50" stroke-width="0.9"/><path d="M1.2,1.8h9.2" stroke="#fafad0" stroke-width="0.8"/><path d="M10.9,1.2 V9.7 H0.6" fill="none" stroke="#282810" stroke-width="1.3"/></svg>
<div class="t" style="left:51.2px;top:371.0px;font-size:8.94px">Rechnungswesen Einkauf</div>
<div style="left:12.0px;top:388.0px;width:8.0px;height:1px;background:repeating-linear-gradient(to right,#b4b4b4 0 1px,transparent 1px 2px)"></div>
<svg style="position:absolute;left:9px;top:385px;overflow:visible" width="7" height="7" viewBox="0 0 7 7"><rect x="0.5" y="0.5" width="6" height="6" fill="#fff" stroke="#a0a0a0" stroke-width="1"/><path d="M1.6,3.5h3.8" stroke="#101010" stroke-width="1"/></svg>
<svg style="position:absolute;left:20.5px;top:383.5px;overflow:visible" width="13" height="10" viewBox="0 0 13 10"><path d="M0.6,-0.2h4l1,1.1h5.6v8.6h-10.6z" fill="#f0f0b8" stroke="#8a8a50" stroke-width="0.9"/><path d="M0.6,9.4 L2.6,3.6 H12.4 L10.6,9.4z" fill="#ecec9c" stroke="#8a8a50" stroke-width="0.8"/><path d="M12.2,3.8 L11.2,9.3 H0.8" fill="none" stroke="#282810" stroke-width="1.3"/></svg>
<div class="t" style="left:36.5px;top:383.5px;font-size:8.94px"><span style="letter-spacing:-0.45px">LAGER</span></div>
<div style="left:26.7px;top:400.5px;width:8.000000000000004px;height:1px;background:repeating-linear-gradient(to right,#b4b4b4 0 1px,transparent 1px 2px)"></div>
<svg style="position:absolute;left:35.2px;top:396.0px;overflow:visible" width="13" height="9" viewBox="0 0 13 9"><rect x="8.7" y="-0.4" width="3.1" height="2.9" fill="#982838"/><path d="M0.4,6.5 L3.2,3.3 L3.7,6 L5.9,3.3 L6.3,6 L8.5,3.3 L8.2,6" stroke="#2818a0" stroke-width="1.5" fill="none" stroke-linejoin="round"/><path d="M9.4,4 L11.6,3.8 L10.2,7.8" stroke="#2818a0" stroke-width="1.4" fill="none"/></svg>
<div class="t" style="left:51.2px;top:396.0px;font-size:8.94px">Lagerauskunft</div>
<div style="left:26.7px;top:413.0px;width:8.000000000000004px;height:1px;background:repeating-linear-gradient(to right,#b4b4b4 0 1px,transparent 1px 2px)"></div>
<svg style="position:absolute;left:35.2px;top:408.5px;overflow:visible" width="13" height="9" viewBox="0 0 13 9"><rect x="8.7" y="-0.4" width="3.1" height="2.9" fill="#982838"/><path d="M0.4,6.5 L3.2,3.3 L3.7,6 L5.9,3.3 L6.3,6 L8.5,3.3 L8.2,6" stroke="#2818a0" stroke-width="1.5" fill="none" stroke-linejoin="round"/><path d="M9.4,4 L11.6,3.8 L10.2,7.8" stroke="#2818a0" stroke-width="1.4" fill="none"/></svg>
<div class="t" style="left:51.2px;top:408.5px;font-size:8.94px">Lagerbuchung</div>
<div style="left:26.7px;top:425.5px;width:8.000000000000004px;height:1px;background:repeating-linear-gradient(to right,#b4b4b4 0 1px,transparent 1px 2px)"></div>
<svg style="position:absolute;left:35.2px;top:421.0px;overflow:visible" width="13" height="9" viewBox="0 0 13 9"><rect x="8.7" y="-0.4" width="3.1" height="2.9" fill="#982838"/><path d="M0.4,6.5 L3.2,3.3 L3.7,6 L5.9,3.3 L6.3,6 L8.5,3.3 L8.2,6" stroke="#2818a0" stroke-width="1.5" fill="none" stroke-linejoin="round"/><path d="M9.4,4 L11.6,3.8 L10.2,7.8" stroke="#2818a0" stroke-width="1.4" fill="none"/></svg>
<div class="t" style="left:51.2px;top:421.0px;font-size:8.94px">Lagerbestandsübersicht</div>
<div style="left:26.7px;top:438.0px;width:8.000000000000004px;height:1px;background:repeating-linear-gradient(to right,#b4b4b4 0 1px,transparent 1px 2px)"></div>
<svg style="position:absolute;left:35.2px;top:433.5px;overflow:visible" width="13" height="9" viewBox="0 0 13 9"><rect x="8.7" y="-0.4" width="3.1" height="2.9" fill="#982838"/><path d="M0.4,6.5 L3.2,3.3 L3.7,6 L5.9,3.3 L6.3,6 L8.5,3.3 L8.2,6" stroke="#2818a0" stroke-width="1.5" fill="none" stroke-linejoin="round"/><path d="M9.4,4 L11.6,3.8 L10.2,7.8" stroke="#2818a0" stroke-width="1.4" fill="none"/></svg>
<div class="t" style="left:51.2px;top:433.5px;font-size:8.94px">Lagerprotokollübersicht</div>
<div style="left:26.7px;top:450.5px;width:8.000000000000004px;height:1px;background:repeating-linear-gradient(to right,#b4b4b4 0 1px,transparent 1px 2px)"></div>
<svg style="position:absolute;left:35.2px;top:446.0px;overflow:visible" width="13" height="9" viewBox="0 0 13 9"><rect x="8.7" y="-0.4" width="3.1" height="2.9" fill="#982838"/><path d="M0.4,6.5 L3.2,3.3 L3.7,6 L5.9,3.3 L6.3,6 L8.5,3.3 L8.2,6" stroke="#2818a0" stroke-width="1.5" fill="none" stroke-linejoin="round"/><path d="M9.4,4 L11.6,3.8 L10.2,7.8" stroke="#2818a0" stroke-width="1.4" fill="none"/></svg>
<div class="t" style="left:51.2px;top:446.0px;font-size:8.94px">Artikelkonto</div>
<div style="left:26.7px;top:463.0px;width:8.000000000000004px;height:1px;background:repeating-linear-gradient(to right,#b4b4b4 0 1px,transparent 1px 2px)"></div>
<svg style="position:absolute;left:35.2px;top:458.5px;overflow:visible" width="13" height="9" viewBox="0 0 13 9"><rect x="8.7" y="-0.4" width="3.1" height="2.9" fill="#982838"/><path d="M0.4,6.5 L3.2,3.3 L3.7,6 L5.9,3.3 L6.3,6 L8.5,3.3 L8.2,6" stroke="#2818a0" stroke-width="1.5" fill="none" stroke-linejoin="round"/><path d="M9.4,4 L11.6,3.8 L10.2,7.8" stroke="#2818a0" stroke-width="1.4" fill="none"/></svg>
<div class="t" style="left:51.2px;top:458.5px;font-size:8.94px">Inventur</div>
<div style="left:12.0px;top:475.5px;width:8.0px;height:1px;background:repeating-linear-gradient(to right,#b4b4b4 0 1px,transparent 1px 2px)"></div>
<svg style="position:absolute;left:9px;top:473px;overflow:visible" width="7" height="7" viewBox="0 0 7 7"><rect x="0.5" y="0.5" width="6" height="6" fill="#fff" stroke="#a0a0a0" stroke-width="1"/><path d="M1.6,3.5h3.8M3.5,1.6v3.8" stroke="#101010" stroke-width="1"/></svg>
<svg style="position:absolute;left:20.5px;top:471.0px;overflow:visible" width="13" height="10" viewBox="0 0 13 10"><path d="M0.4,-0.3h4l1,1.3h5.4v8.6h-10.4z" fill="#e6e884" stroke="#8a8a50" stroke-width="0.9"/><path d="M1.2,1.8h9.2" stroke="#fafad0" stroke-width="0.8"/><path d="M10.9,1.2 V9.7 H0.6" fill="none" stroke="#282810" stroke-width="1.3"/></svg>
<div class="t" style="left:36.5px;top:471.0px;font-size:8.94px"><span style="letter-spacing:-0.45px">INFORMATIONS-SYSTEME</span></div>
<div style="left:12.0px;top:488.0px;width:8.0px;height:1px;background:repeating-linear-gradient(to right,#b4b4b4 0 1px,transparent 1px 2px)"></div>
<svg style="position:absolute;left:9px;top:485px;overflow:visible" width="7" height="7" viewBox="0 0 7 7"><rect x="0.5" y="0.5" width="6" height="6" fill="#fff" stroke="#a0a0a0" stroke-width="1"/><path d="M1.6,3.5h3.8M3.5,1.6v3.8" stroke="#101010" stroke-width="1"/></svg>
<svg style="position:absolute;left:20.5px;top:483.5px;overflow:visible" width="13" height="10" viewBox="0 0 13 10"><path d="M0.4,-0.3h4l1,1.3h5.4v8.6h-10.4z" fill="#e6e884" stroke="#8a8a50" stroke-width="0.9"/><path d="M1.2,1.8h9.2" stroke="#fafad0" stroke-width="0.8"/><path d="M10.9,1.2 V9.7 H0.6" fill="none" stroke="#282810" stroke-width="1.3"/></svg>
<div class="t" style="left:36.5px;top:483.5px;font-size:8.94px"><span style="letter-spacing:-0.45px">STAMMDATEN</span></div>
<div style="left:12.0px;top:500.5px;width:8.0px;height:1px;background:repeating-linear-gradient(to right,#b4b4b4 0 1px,transparent 1px 2px)"></div>
<svg style="position:absolute;left:9px;top:498px;overflow:visible" width="7" height="7" viewBox="0 0 7 7"><rect x="0.5" y="0.5" width="6" height="6" fill="#fff" stroke="#a0a0a0" stroke-width="1"/><path d="M1.6,3.5h3.8M3.5,1.6v3.8" stroke="#101010" stroke-width="1"/></svg>
<svg style="position:absolute;left:20.5px;top:496.0px;overflow:visible" width="13" height="10" viewBox="0 0 13 10"><path d="M0.4,-0.3h4l1,1.3h5.4v8.6h-10.4z" fill="#e6e884" stroke="#8a8a50" stroke-width="0.9"/><path d="M1.2,1.8h9.2" stroke="#fafad0" stroke-width="0.8"/><path d="M10.9,1.2 V9.7 H0.6" fill="none" stroke="#282810" stroke-width="1.3"/></svg>
<div class="t" style="left:36.5px;top:496.0px;font-size:8.94px"><span style="letter-spacing:-0.45px">STATISTIKEN</span></div>
<div style="left:12.0px;top:513.0px;width:8.0px;height:1px;background:repeating-linear-gradient(to right,#b4b4b4 0 1px,transparent 1px 2px)"></div>
<svg style="position:absolute;left:9px;top:511px;overflow:visible" width="7" height="7" viewBox="0 0 7 7"><rect x="0.5" y="0.5" width="6" height="6" fill="#fff" stroke="#a0a0a0" stroke-width="1"/><path d="M1.6,3.5h3.8M3.5,1.6v3.8" stroke="#101010" stroke-width="1"/></svg>
<svg style="position:absolute;left:20.5px;top:508.5px;overflow:visible" width="13" height="10" viewBox="0 0 13 10"><path d="M0.4,-0.3h4l1,1.3h5.4v8.6h-10.4z" fill="#e6e884" stroke="#8a8a50" stroke-width="0.9"/><path d="M1.2,1.8h9.2" stroke="#fafad0" stroke-width="0.8"/><path d="M10.9,1.2 V9.7 H0.6" fill="none" stroke="#282810" stroke-width="1.3"/></svg>
<div class="t" style="left:36.5px;top:508.5px;font-size:8.94px"><span style="letter-spacing:-0.45px">DIENSTPROGRAMME</span></div>
<div style="left:12.0px;top:525.5px;width:8.0px;height:1px;background:repeating-linear-gradient(to right,#b4b4b4 0 1px,transparent 1px 2px)"></div>
<svg style="position:absolute;left:9px;top:523px;overflow:visible" width="7" height="7" viewBox="0 0 7 7"><rect x="0.5" y="0.5" width="6" height="6" fill="#fff" stroke="#a0a0a0" stroke-width="1"/><path d="M1.6,3.5h3.8M3.5,1.6v3.8" stroke="#101010" stroke-width="1"/></svg>
<svg style="position:absolute;left:20.5px;top:521.0px;overflow:visible" width="13" height="10" viewBox="0 0 13 10"><path d="M0.4,-0.3h4l1,1.3h5.4v8.6h-10.4z" fill="#e6e884" stroke="#8a8a50" stroke-width="0.9"/><path d="M1.2,1.8h9.2" stroke="#fafad0" stroke-width="0.8"/><path d="M10.9,1.2 V9.7 H0.6" fill="none" stroke="#282810" stroke-width="1.3"/></svg>
<div class="t" style="left:36.5px;top:521.0px;font-size:8.94px">MyEnterprise <span style="letter-spacing:-0.45px">VERWALTUNG</span></div>
<div style="left:12.0px;top:538.0px;width:8.0px;height:1px;background:repeating-linear-gradient(to right,#b4b4b4 0 1px,transparent 1px 2px)"></div>
<svg style="position:absolute;left:9px;top:535px;overflow:visible" width="7" height="7" viewBox="0 0 7 7"><rect x="0.5" y="0.5" width="6" height="6" fill="#fff" stroke="#a0a0a0" stroke-width="1"/><path d="M1.6,3.5h3.8M3.5,1.6v3.8" stroke="#101010" stroke-width="1"/></svg>
<svg style="position:absolute;left:20.5px;top:533.5px;overflow:visible" width="13" height="10" viewBox="0 0 13 10"><path d="M0.4,-0.3h4l1,1.3h5.4v8.6h-10.4z" fill="#e6e884" stroke="#8a8a50" stroke-width="0.9"/><path d="M1.2,1.8h9.2" stroke="#fafad0" stroke-width="0.8"/><path d="M10.9,1.2 V9.7 H0.6" fill="none" stroke="#282810" stroke-width="1.3"/></svg>
<div class="t" style="left:36.5px;top:533.5px;font-size:8.94px">Zeitverwaltung <span style="letter-spacing:-0.45px">MD</span></div>
<div style="left:12.0px;top:550.5px;width:8.0px;height:1px;background:repeating-linear-gradient(to right,#b4b4b4 0 1px,transparent 1px 2px)"></div>
<svg style="position:absolute;left:9px;top:548px;overflow:visible" width="7" height="7" viewBox="0 0 7 7"><rect x="0.5" y="0.5" width="6" height="6" fill="#fff" stroke="#a0a0a0" stroke-width="1"/><path d="M1.6,3.5h3.8M3.5,1.6v3.8" stroke="#101010" stroke-width="1"/></svg>
<svg style="position:absolute;left:20.5px;top:546.0px;overflow:visible" width="13" height="10" viewBox="0 0 13 10"><path d="M0.4,-0.3h4l1,1.3h5.4v8.6h-10.4z" fill="#e6e884" stroke="#8a8a50" stroke-width="0.9"/><path d="M1.2,1.8h9.2" stroke="#fafad0" stroke-width="0.8"/><path d="M10.9,1.2 V9.7 H0.6" fill="none" stroke="#282810" stroke-width="1.3"/></svg>
<div class="t" style="left:36.5px;top:546.0px;font-size:8.94px"><span style="letter-spacing:-0.45px">IMPORTE</span></div>
<div style="left:12.0px;top:563.0px;width:8.0px;height:1px;background:repeating-linear-gradient(to right,#b4b4b4 0 1px,transparent 1px 2px)"></div>
<svg style="position:absolute;left:9px;top:561px;overflow:visible" width="7" height="7" viewBox="0 0 7 7"><rect x="0.5" y="0.5" width="6" height="6" fill="#fff" stroke="#a0a0a0" stroke-width="1"/><path d="M1.6,3.5h3.8M3.5,1.6v3.8" stroke="#101010" stroke-width="1"/></svg>
<svg style="position:absolute;left:20.5px;top:558.5px;overflow:visible" width="13" height="10" viewBox="0 0 13 10"><path d="M0.4,-0.3h4l1,1.3h5.4v8.6h-10.4z" fill="#e6e884" stroke="#8a8a50" stroke-width="0.9"/><path d="M1.2,1.8h9.2" stroke="#fafad0" stroke-width="0.8"/><path d="M10.9,1.2 V9.7 H0.6" fill="none" stroke="#282810" stroke-width="1.3"/></svg>
<div class="t" style="left:36.5px;top:558.5px;font-size:8.94px"><span style="letter-spacing:-0.45px">DRUCKEREINSTELLUNG</span></div>
<div style="left:0px;top:563px;width:800px;height:22px;background:#d4d0c8"></div>
<div style="left:0px;top:563px;width:800px;height:1px;background:#fff"></div>
<div style="left:0px;top:584px;width:800px;height:1px;background:#808080"></div>
<div style="left:0px;top:585px;width:800px;height:1px;background:#fff"></div>
<div style="left:2px;top:566px;width:1px;height:17px;background:#808080"></div>
<div style="left:3px;top:566px;width:1px;height:17px;background:#fff"></div>
<div style="left:101px;top:566px;width:1px;height:17px;background:#a0a0a0"></div>
<div style="left:102px;top:566px;width:1px;height:17px;background:#fff"></div>
<div style="left:201px;top:566px;width:1px;height:17px;background:#a0a0a0"></div>
<div style="left:202px;top:566px;width:1px;height:17px;background:#fff"></div>
<div style="left:301px;top:566px;width:1px;height:17px;background:#a0a0a0"></div>
<div style="left:302px;top:566px;width:1px;height:17px;background:#fff"></div>
<div style="left:401px;top:566px;width:1px;height:17px;background:#a0a0a0"></div>
<div style="left:402px;top:566px;width:1px;height:17px;background:#fff"></div>
<div style="left:501px;top:566px;width:1px;height:17px;background:#a0a0a0"></div>
<div style="left:502px;top:566px;width:1px;height:17px;background:#fff"></div>
<div style="left:599px;top:564px;width:2px;height:20px;background:#707070"></div>
<div class="t" style="left:1.75px;top:570px;width:100px;text-align:center;transform-origin:50% 0;">Neuanlage F5</div>
<div class="t" style="left:101.75px;top:570px;width:100px;text-align:center;transform-origin:50% 0;">Suchen F6</div>
<div class="t" style="left:202.45px;top:570.7px;width:100px;text-align:center;transform-origin:50% 0;color:#fff">Löschen F7</div>
<div class="t" style="left:201.75px;top:570px;width:100px;text-align:center;transform-origin:50% 0;color:#a0a0a0">Löschen F7</div>
<div class="t" style="left:301.75px;top:570px;width:100px;text-align:center;transform-origin:50% 0;">Speichern F8</div>
<div class="t" style="left:401.5px;top:570px;width:100px;text-align:center;transform-origin:50% 0;">Kopieren F9</div>
<div class="t" style="left:502.7px;top:570.7px;width:100px;text-align:center;transform-origin:50% 0;color:#fff">Kopfzusatz F4</div>
<div class="t" style="left:502px;top:570px;width:100px;text-align:center;transform-origin:50% 0;color:#a0a0a0">Kopfzusatz F4</div>
<div style="left:504.5px;top:587px;width:101.0px;height:13px;box-shadow:inset 1px 1px 0 #808080,inset -1px -1px 0 #fff"></div>
<div class="t" style="left:505.5px;top:588.5px;font-size:9.35px">KvAuftra.<span style="letter-spacing:-0.45px">DLL</span> - 7.04.0234</div>
<div style="left:608.5px;top:587px;width:53.0px;height:13px;box-shadow:inset 1px 1px 0 #808080,inset -1px -1px 0 #fff"></div>
<div class="t" style="left:609.5px;top:588.5px;font-size:9.35px">Terren André</div>
<div style="left:664.5px;top:587px;width:43.5px;height:13px;box-shadow:inset 1px 1px 0 #808080,inset -1px -1px 0 #fff"></div>
<div class="t" style="left:665.5px;top:588.5px;font-size:8.9px"><span style="letter-spacing:-0.45px">MD</span> Belgien</div>
<div style="left:710.5px;top:587px;width:48.5px;height:13px;box-shadow:inset 1px 1px 0 #808080,inset -1px -1px 0 #fff"></div>
<div class="t" style="left:711.5px;top:588.5px;font-size:9.35px">20.09.2004</div>
<div style="left:761px;top:587px;width:38px;height:13px;box-shadow:inset 1px 1px 0 #808080,inset -1px -1px 0 #fff"></div>
<div class="t" style="left:762px;top:588.5px;font-size:9.35px">09:37:08</div>
<div style="left:263px;top:63px;width:521px;height:378px;background:#d4d0c8;box-shadow:inset 1px 1px 0 #ffffff,inset -1px -1px 0 #404040,inset -2px -2px 0 #808080"></div>
<div style="left:266px;top:66px;width:515px;height:14px;background:linear-gradient(to right,#0a246a,#a6caf0)"></div>
<svg style="position:absolute;left:267px;top:67px;overflow:visible" width="12" height="12" viewBox="0 0 11 11"><rect x="0.5" y="0.5" width="10" height="10" fill="#f6f2fa"/><rect x="8" y="-1" width="3.5" height="5" fill="#902058"/><rect x="8" y="4" width="2.5" height="1" fill="#e0b0d0"/><path d="M1.8,7.5 L3.8,4 L4.8,7 L6.3,4 L6.8,7 L8.5,4.8" fill="none" stroke="#8c9a98" stroke-width="1.3"/><rect x="1.5" y="8.6" width="7" height="0.8" fill="#c8c8e8"/></svg>
<div class="b" style="left:282px;top:67px;">Auftrag - Auftrag</div>
<div style="left:741.5px;top:67px;width:11.5px;height:10.5px;background:#d4d0c8;box-shadow:inset 1px 1px 0 #ffffff,inset -1px -1px 0 #404040,inset -2px -2px 0 #808080"></div>
<svg style="position:absolute;left:741.5px;top:67px;overflow:visible" width="11.5" height="10.5" viewBox="0 0 11.5 10.5"><rect x="2.75" y="6.5" width="5" height="1.6" fill="#000"/></svg>
<div style="left:753.5px;top:67px;width:11.5px;height:10.5px;background:#d4d0c8;box-shadow:inset 1px 1px 0 #ffffff,inset -1px -1px 0 #404040,inset -2px -2px 0 #808080"></div>
<svg style="position:absolute;left:753.5px;top:67px;overflow:visible" width="11.5" height="10.5" viewBox="0 0 11.5 10.5"><rect x="2.45" y="2.05" width="6.6" height="6" fill="none" stroke="#000" stroke-width="1"/><rect x="1.9500000000000002" y="1.5499999999999998" width="7.6" height="1.6" fill="#000"/></svg>
<div style="left:768px;top:67px;width:12px;height:10.5px;background:#d4d0c8;box-shadow:inset 1px 1px 0 #ffffff,inset -1px -1px 0 #404040,inset -2px -2px 0 #808080"></div>
<svg style="position:absolute;left:768px;top:67px;overflow:visible" width="12" height="10.5" viewBox="0 0 12 10.5"><path d="M3.0,2.45L9.0,8.45M9.0,2.45L3.0,8.45" stroke="#000" stroke-width="1.5"/></svg>
<div style="left:267px;top:81px;width:513px;height:357px;box-shadow:inset 1px 1px 0 #404040,inset -1px -1px 0 #ffffff"></div>
<div style="left:276px;top:101.5px;width:496px;height:425px;"></div>
<div style="left:276px;top:101.5px;width:496px;height:325px;box-shadow:inset 1px 1px 0 #ffffff,inset -1px -1px 0 #404040,inset -2px -2px 0 #808080"></div>
<div style="left:335px;top:88px;width:77px;height:13.5px;background:#d4d0c8;box-shadow:inset 1px 1px 0 #ffffff,inset -1px 0 0 #404040,inset -2px 0 0 #808080"></div>
<div class="t" style="left:339.5px;top:90.5px;">Auftragspositionen</div>
<div style="left:278.5px;top:86px;width:57px;height:16.5px;background:#d4d0c8;box-shadow:inset 1px 1px 0 #ffffff,inset -1px 0 0 #404040,inset -2px 0 0 #808080"></div>
<div class="t" style="left:283px;top:88.5px;">Auftragskopf</div>
<div style="left:283px;top:110px;width:208px;height:91px;border:1px solid #808080;box-shadow:1px 1px 0 #ffffff,inset 1px 1px 0 #ffffff"></div>
<div class="t" style="left:288px;top:105px;background:#d4d0c8;padding:0 1px">Angebot</div>
<div class="t" style="left:291px;top:117.3px;">Personennr.</div>
<div class="t" style="left:365px;top:117.3px;">0</div>
<div class="t" style="left:401px;top:117.3px;">Kd.Nr.</div>
<div class="t" style="left:446px;top:117.3px;">0</div>
<div class="t" style="left:291px;top:135px;">Auftragsart</div>
<div style="left:364px;top:133.5px;width:121px;height:15.5px;background:#fff;box-shadow:inset 1px 1px 0 #808080,inset 2px 2px 0 #404040,inset -1px -1px 0 #ffffff,inset -2px -2px 0 #d4d0c8"></div>
<div style="left:471px;top:135.5px;width:12px;height:11.5px;background:#d4d0c8;box-shadow:inset 1px 1px 0 #ffffff,inset -1px -1px 0 #404040,inset -2px -2px 0 #808080"></div>
<svg style="position:absolute;left:473.5px;top:139.75px;overflow:visible" width="7" height="4" viewBox="0 0 7 4"><path d="M0,0H7L3.5,3.5z" fill="#000"/></svg>
<div class="t" style="left:367px;top:136.5px;">01-Angebot</div>
<div class="t" style="left:291px;top:151.5px;">Suchbegriff</div>
<div class="t" style="left:291px;top:170px;">AuftragsNr</div>
<div class="t" style="left:291px;top:187.5px;">Auftragsdatum</div>
<div style="left:283px;top:204px;width:208px;height:215px;border:1px solid #808080;box-shadow:1px 1px 0 #ffffff,inset 1px 1px 0 #ffffff"></div>
<div class="t" style="left:291px;top:213px;">Wunschtermin</div>
<div class="t" style="left:291px;top:231px;">Kalenderwoche</div>
<div class="t" style="left:291px;top:249.5px;">Herkunft</div>
<div class="t" style="left:291px;top:267.5px;">IhrZeichen</div>
<div class="t" style="left:291px;top:285px;">UnserZeichen</div>
<div class="t" style="left:291px;top:302px;">Kennzeichen</div>
<div class="t" style="left:291px;top:318.5px;">Versandart</div>
<div class="t" style="left:291px;top:336.5px;">Währung</div>
<div class="t" style="left:291px;top:354px;">Sprache</div>
<div class="t" style="left:291px;top:370.5px;">Lager</div>
<div class="t" style="left:291px;top:386.5px;">Tour</div>
<div class="t" style="left:291px;top:402px;">Projektnummer</div>
<div style="left:364px;top:299.5px;width:121px;height:16.0px;background:#fff;box-shadow:inset 1px 1px 0 #808080,inset 2px 2px 0 #404040,inset -1px -1px 0 #ffffff,inset -2px -2px 0 #d4d0c8"></div>
<div style="left:471px;top:301.5px;width:12px;height:12.0px;background:#d4d0c8;box-shadow:inset 1px 1px 0 #ffffff,inset -1px -1px 0 #404040,inset -2px -2px 0 #808080"></div>
<svg style="position:absolute;left:473.5px;top:306.0px;overflow:visible" width="7" height="4" viewBox="0 0 7 4"><path d="M0,0H7L3.5,3.5z" fill="#000"/></svg>
<div style="left:364px;top:316px;width:121px;height:16px;background:#fff;box-shadow:inset 1px 1px 0 #808080,inset 2px 2px 0 #404040,inset -1px -1px 0 #ffffff,inset -2px -2px 0 #d4d0c8"></div>
<div style="left:471px;top:318px;width:12px;height:12px;background:#d4d0c8;box-shadow:inset 1px 1px 0 #ffffff,inset -1px -1px 0 #404040,inset -2px -2px 0 #808080"></div>
<svg style="position:absolute;left:473.5px;top:322.5px;overflow:visible" width="7" height="4" viewBox="0 0 7 4"><path d="M0,0H7L3.5,3.5z" fill="#000"/></svg>
<div style="left:364px;top:332px;width:121px;height:16px;background:#fff;box-shadow:inset 1px 1px 0 #808080,inset 2px 2px 0 #404040,inset -1px -1px 0 #ffffff,inset -2px -2px 0 #d4d0c8"></div>
<div style="left:471px;top:334px;width:12px;height:12px;background:#d4d0c8;box-shadow:inset 1px 1px 0 #ffffff,inset -1px -1px 0 #404040,inset -2px -2px 0 #808080"></div>
<svg style="position:absolute;left:473.5px;top:338.5px;overflow:visible" width="7" height="4" viewBox="0 0 7 4"><path d="M0,0H7L3.5,3.5z" fill="#000"/></svg>
<div style="left:364px;top:348px;width:121px;height:16px;background:#fff;box-shadow:inset 1px 1px 0 #808080,inset 2px 2px 0 #404040,inset -1px -1px 0 #ffffff,inset -2px -2px 0 #d4d0c8"></div>
<div style="left:471px;top:350px;width:12px;height:12px;background:#d4d0c8;box-shadow:inset 1px 1px 0 #ffffff,inset -1px -1px 0 #404040,inset -2px -2px 0 #808080"></div>
<svg style="position:absolute;left:473.5px;top:354.5px;overflow:visible" width="7" height="4" viewBox="0 0 7 4"><path d="M0,0H7L3.5,3.5z" fill="#000"/></svg>
<div style="left:364px;top:364.5px;width:121px;height:16.0px;background:#fff;box-shadow:inset 1px 1px 0 #808080,inset 2px 2px 0 #404040,inset -1px -1px 0 #ffffff,inset -2px -2px 0 #d4d0c8"></div>
<div style="left:471px;top:366.5px;width:12px;height:12.0px;background:#d4d0c8;box-shadow:inset 1px 1px 0 #ffffff,inset -1px -1px 0 #404040,inset -2px -2px 0 #808080"></div>
<svg style="position:absolute;left:473.5px;top:371.0px;overflow:visible" width="7" height="4" viewBox="0 0 7 4"><path d="M0,0H7L3.5,3.5z" fill="#000"/></svg>
<div style="left:364px;top:381.5px;width:121px;height:16.0px;background:#fff;box-shadow:inset 1px 1px 0 #808080,inset 2px 2px 0 #404040,inset -1px -1px 0 #ffffff,inset -2px -2px 0 #d4d0c8"></div>
<div style="left:471px;top:383.5px;width:12px;height:12.0px;background:#d4d0c8;box-shadow:inset 1px 1px 0 #ffffff,inset -1px -1px 0 #404040,inset -2px -2px 0 #808080"></div>
<svg style="position:absolute;left:473.5px;top:388.0px;overflow:visible" width="7" height="4" viewBox="0 0 7 4"><path d="M0,0H7L3.5,3.5z" fill="#000"/></svg>
<div style="left:364px;top:397.5px;width:121px;height:16.0px;background:#fff;box-shadow:inset 1px 1px 0 #808080,inset 2px 2px 0 #404040,inset -1px -1px 0 #ffffff,inset -2px -2px 0 #d4d0c8"></div>
<div style="left:471px;top:399.5px;width:12px;height:12.0px;background:#d4d0c8;box-shadow:inset 1px 1px 0 #ffffff,inset -1px -1px 0 #404040,inset -2px -2px 0 #808080"></div>
<svg style="position:absolute;left:473.5px;top:404.0px;overflow:visible" width="7" height="4" viewBox="0 0 7 4"><path d="M0,0H7L3.5,3.5z" fill="#000"/></svg>
<div style="left:495.5px;top:109.5px;width:267.5px;height:127.5px;border:1px solid #808080;box-shadow:1px 1px 0 #ffffff,inset 1px 1px 0 #ffffff"></div>
<div style="left:498.5px;top:111.5px;width:72.5px;height:16.5px;background:#d4d0c8;box-shadow:inset 1px 1px 0 #ffffff,inset -1px -1px 0 #404040,inset -2px -2px 0 #808080"></div>
<div class="t" style="left:498.5px;top:114.75px;width:72.5px;text-align:center;transform-origin:50% 0;"><u>K</u>unde öffnen</div>
<div style="left:498.5px;top:130.5px;width:72.5px;height:16.0px;background:#d4d0c8;box-shadow:inset 1px 1px 0 #ffffff,inset -1px -1px 0 #404040,inset -2px -2px 0 #808080"></div>
<div class="t" style="left:499.2px;top:134.2px;width:72.5px;text-align:center;transform-origin:50% 0;color:#fff"><u>V</u>ersand</div>
<div class="t" style="left:498.5px;top:133.5px;width:72.5px;text-align:center;transform-origin:50% 0;color:#8c8c8c"><u>V</u>ersand</div>
<div style="left:572px;top:111.5px;width:184.5px;height:17.0px;background:#fff;box-shadow:inset 1px 1px 0 #808080,inset 2px 2px 0 #404040,inset -1px -1px 0 #ffffff,inset -2px -2px 0 #d4d0c8"></div>
<div style="left:572px;top:130px;width:184.5px;height:16.5px;background:#fff;box-shadow:inset 1px 1px 0 #808080,inset 2px 2px 0 #404040,inset -1px -1px 0 #ffffff,inset -2px -2px 0 #d4d0c8"></div>
<div style="left:572px;top:148px;width:184.5px;height:16px;background:#fff;box-shadow:inset 1px 1px 0 #808080,inset 2px 2px 0 #404040,inset -1px -1px 0 #ffffff,inset -2px -2px 0 #d4d0c8"></div>
<div style="left:572px;top:165.5px;width:184.5px;height:16.5px;background:#fff;box-shadow:inset 1px 1px 0 #808080,inset 2px 2px 0 #404040,inset -1px -1px 0 #ffffff,inset -2px -2px 0 #d4d0c8"></div>
<div style="left:572px;top:183px;width:184.5px;height:16.5px;background:#fff;box-shadow:inset 1px 1px 0 #808080,inset 2px 2px 0 #404040,inset -1px -1px 0 #ffffff,inset -2px -2px 0 #d4d0c8"></div>
<div style="left:572px;top:219px;width:184.5px;height:16px;background:#fff;box-shadow:inset 1px 1px 0 #808080,inset 2px 2px 0 #404040,inset -1px -1px 0 #ffffff,inset -2px -2px 0 #d4d0c8"></div>
<div style="left:498.5px;top:165.5px;width:72.5px;height:16.5px;background:#d4d0c8;box-shadow:inset 1px 1px 0 #ffffff,inset -1px -1px 0 #404040,inset -2px -2px 0 #808080"></div>
<div class="t" style="left:499.2px;top:169.45px;width:72.5px;text-align:center;transform-origin:50% 0;color:#fff"><u>S</u>achbearbeiter</div>
<div class="t" style="left:498.5px;top:168.75px;width:72.5px;text-align:center;transform-origin:50% 0;color:#8c8c8c"><u>S</u>achbearbeiter</div>
<div style="left:506px;top:201px;width:62px;height:16px;background:#fff;box-shadow:inset 1px 1px 0 #808080,inset 2px 2px 0 #404040,inset -1px -1px 0 #ffffff,inset -2px -2px 0 #d4d0c8"></div>
<div style="left:554px;top:203px;width:12px;height:12px;background:#d4d0c8;box-shadow:inset 1px 1px 0 #ffffff,inset -1px -1px 0 #404040,inset -2px -2px 0 #808080"></div>
<svg style="position:absolute;left:556.5px;top:207.5px;overflow:visible" width="7" height="4" viewBox="0 0 7 4"><path d="M0,0H7L3.5,3.5z" fill="#000"/></svg>
<div style="left:572px;top:201px;width:37px;height:16px;background:#fff;box-shadow:inset 1px 1px 0 #808080,inset 2px 2px 0 #404040,inset -1px -1px 0 #ffffff,inset -2px -2px 0 #d4d0c8"></div>
<div style="left:610px;top:201px;width:146.5px;height:16px;background:#fff;box-shadow:inset 1px 1px 0 #808080,inset 2px 2px 0 #404040,inset -1px -1px 0 #ffffff,inset -2px -2px 0 #d4d0c8"></div>
<div class="t" style="left:511px;top:221.5px;">Anrede</div>
<div style="left:495px;top:241px;width:270px;height:17px;background:#d4d0c8;box-shadow:inset 1px 1px 0 #ffffff,inset -1px -1px 0 #404040,inset -2px -2px 0 #808080"></div>
<div class="t" style="left:634px;top:244px;width:40px;text-align:center;transform-origin:50% 0"><span style="letter-spacing:-0.45px">SKG</span></div>
<div style="left:495.5px;top:263px;width:267.5px;height:129px;border:1px solid #808080;box-shadow:1px 1px 0 #ffffff,inset 1px 1px 0 #ffffff"></div>
<div class="t" style="left:505px;top:258px;background:#d4d0c8;padding:0 1px">Lieferungsstelle</div>
<div style="left:498.5px;top:267px;width:70.5px;height:17px;background:#fff;box-shadow:inset 1px 1px 0 #808080,inset 2px 2px 0 #404040,inset -1px -1px 0 #ffffff,inset -2px -2px 0 #d4d0c8"></div>
<div style="left:572px;top:267.5px;width:184.5px;height:16.5px;background:#fff;box-shadow:inset 1px 1px 0 #808080,inset 2px 2px 0 #404040,inset -1px -1px 0 #ffffff,inset -2px -2px 0 #d4d0c8"></div>
<div style="left:572px;top:285.5px;width:184.5px;height:16.0px;background:#fff;box-shadow:inset 1px 1px 0 #808080,inset 2px 2px 0 #404040,inset -1px -1px 0 #ffffff,inset -2px -2px 0 #d4d0c8"></div>
<div style="left:572px;top:302.5px;width:184.5px;height:16.5px;background:#fff;box-shadow:inset 1px 1px 0 #808080,inset 2px 2px 0 #404040,inset -1px -1px 0 #ffffff,inset -2px -2px 0 #d4d0c8"></div>
<div style="left:572px;top:320px;width:184.5px;height:16.5px;background:#fff;box-shadow:inset 1px 1px 0 #808080,inset 2px 2px 0 #404040,inset -1px -1px 0 #ffffff,inset -2px -2px 0 #d4d0c8"></div>
<div style="left:572px;top:338px;width:184.5px;height:16.5px;background:#fff;box-shadow:inset 1px 1px 0 #808080,inset 2px 2px 0 #404040,inset -1px -1px 0 #ffffff,inset -2px -2px 0 #d4d0c8"></div>
<div style="left:572px;top:373.5px;width:184.5px;height:17.0px;background:#fff;box-shadow:inset 1px 1px 0 #808080,inset 2px 2px 0 #404040,inset -1px -1px 0 #ffffff,inset -2px -2px 0 #d4d0c8"></div>
<div style="left:498.5px;top:285.5px;width:72.5px;height:16.0px;background:#d4d0c8;box-shadow:inset 1px 1px 0 #ffffff,inset -1px -1px 0 #404040,inset -2px -2px 0 #808080"></div>
<div class="t" style="left:498.5px;top:288.5px;width:72.5px;text-align:center;transform-origin:50% 0;">Kunde öffnen</div>
<div style="left:498.5px;top:320px;width:72.5px;height:16.5px;background:#d4d0c8;box-shadow:inset 1px 1px 0 #ffffff,inset -1px -1px 0 #404040,inset -2px -2px 0 #808080"></div>
<div class="t" style="left:499.2px;top:323.95px;width:72.5px;text-align:center;transform-origin:50% 0;color:#fff"><u>S</u>achbearbeiter</div>
<div class="t" style="left:498.5px;top:323.25px;width:72.5px;text-align:center;transform-origin:50% 0;color:#8c8c8c"><u>S</u>achbearbeiter</div>
<div style="left:506px;top:356px;width:62px;height:16.5px;background:#fff;box-shadow:inset 1px 1px 0 #808080,inset 2px 2px 0 #404040,inset -1px -1px 0 #ffffff,inset -2px -2px 0 #d4d0c8"></div>
<div style="left:554px;top:358px;width:12px;height:12.5px;background:#d4d0c8;box-shadow:inset 1px 1px 0 #ffffff,inset -1px -1px 0 #404040,inset -2px -2px 0 #808080"></div>
<svg style="position:absolute;left:556.5px;top:362.75px;overflow:visible" width="7" height="4" viewBox="0 0 7 4"><path d="M0,0H7L3.5,3.5z" fill="#000"/></svg>
<div style="left:572px;top:356px;width:37px;height:16.5px;background:#fff;box-shadow:inset 1px 1px 0 #808080,inset 2px 2px 0 #404040,inset -1px -1px 0 #ffffff,inset -2px -2px 0 #d4d0c8"></div>
<div style="left:610px;top:356px;width:146.5px;height:16.5px;background:#fff;box-shadow:inset 1px 1px 0 #808080,inset 2px 2px 0 #404040,inset -1px -1px 0 #ffffff,inset -2px -2px 0 #d4d0c8"></div>
<div class="t" style="left:511px;top:377px;">Anrede</div>
<div style="left:495.5px;top:399px;width:164.5px;height:20px;border:1px solid #808080;box-shadow:1px 1px 0 #ffffff,inset 1px 1px 0 #ffffff"></div>
<div class="t" style="left:511px;top:405px;">Auslieferungsdatum</div>
<div style="left:600px;top:400px;width:51px;height:18px;background:#fff;box-shadow:inset 1px 1px 0 #808080,inset 2px 2px 0 #404040,inset -1px -1px 0 #ffffff,inset -2px -2px 0 #d4d0c8"></div>
<div class="t" style="left:603px;top:404px;">20.09.2004</div>
<div style="left:670.5px;top:401px;width:92.5px;height:16.5px;border:1px solid #808080;box-shadow:1px 1px 0 #ffffff,inset 1px 1px 0 #ffffff"></div>
<div class="t" style="left:676.5px;top:396px;background:#d4d0c8;padding:0 1px">Rückstand</div>
<svg style="position:absolute;left:675px;top:407px;overflow:visible" width="10" height="10" viewBox="0 0 10 10"><circle cx="5" cy="5" r="3.6" fill="#fff"/><path d="M1.6,8.4A4.4,4.4 0 0 1 8.4,1.6" fill="none" stroke="#808080" stroke-width="1"/><path d="M8.4,1.6A4.4,4.4 0 0 1 1.6,8.4" fill="none" stroke="#fff" stroke-width="1"/><path d="M2.5,7.5A3.5,3.5 0 0 1 7.5,2.5" fill="none" stroke="#404040" stroke-width="1"/></svg>
<div class="t" style="left:688.8px;top:408px;">Ja</div>
<svg style="position:absolute;left:710px;top:407px;overflow:visible" width="10" height="10" viewBox="0 0 10 10"><circle cx="5" cy="5" r="3.6" fill="#fff"/><path d="M1.6,8.4A4.4,4.4 0 0 1 8.4,1.6" fill="none" stroke="#808080" stroke-width="1"/><path d="M8.4,1.6A4.4,4.4 0 0 1 1.6,8.4" fill="none" stroke="#fff" stroke-width="1"/><path d="M2.5,7.5A3.5,3.5 0 0 1 7.5,2.5" fill="none" stroke="#404040" stroke-width="1"/></svg>
<div class="t" style="left:724.5px;top:408px;">Nein</div>
<div style="left:364px;top:148.5px;width:171px;height:154px;background:#fff;border:1px solid #000;box-sizing:border-box"></div>
<div class="t" style="left:367px;top:150.0px;">01-Angebot</div>
<div class="t" style="left:367px;top:160.2px;">10-Auftrag mit Montagearbeit</div>
<div style="left:365px;top:170.4px;width:169px;height:10.2px;background:#0a246a"></div>
<div class="t" style="left:367px;top:170.4px;color:#fff">15-Auftrag ohne Montagearbeit</div>
<div class="t" style="left:367px;top:180.6px;">30-Reparaturauftrag Kunde</div>
<div class="t" style="left:367px;top:190.8px;">35-Retour Kunde</div>
<div class="t" style="left:367px;top:201.0px;">40-Programmierauftrag</div>
<div class="t" style="left:367px;top:211.2px;">50-Leihschein</div>
<div class="t" style="left:367px;top:221.39999999999998px;">60-Barverkauf Multidata</div>
<div class="t" style="left:367px;top:231.6px;">71-Verkauf <span style="letter-spacing:-0.45px">MDB</span> Shop</div>
<div class="t" style="left:367px;top:241.8px;">80-Gutschrift</div>
<div class="t" style="left:367px;top:252.0px;">81-Wertgutschrift</div>
<div class="t" style="left:367px;top:262.2px;">90-Wartungsvertrag</div>
<div class="t" style="left:367px;top:272.4px;">91-Berechnung Wartungsverträge</div>
<div class="t" style="left:367px;top:282.6px;">99-Interne Berechnung</div>
<div class="t" style="left:367px;top:292.79999999999995px;">&lt;Neu/Ändern&gt;</div>
</div></body></html>
